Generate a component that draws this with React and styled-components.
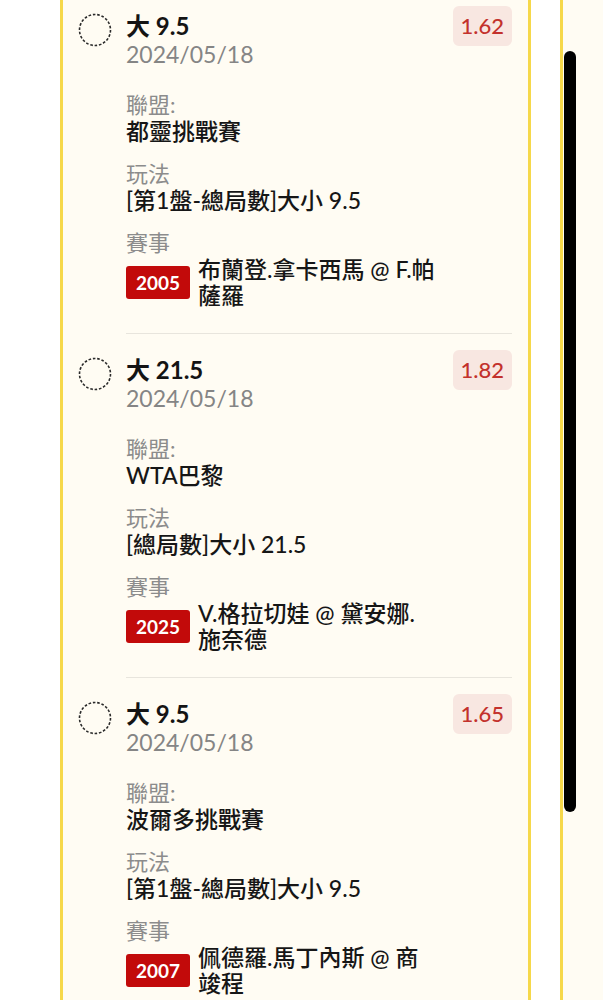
import React from 'react';
import styled, { createGlobalStyle } from 'styled-components';

const GlobalStyle = createGlobalStyle`
  html, body { margin: 0; padding: 0; overflow: hidden; background: #ffffff; }
  body { font-family: Lato, "Noto Sans CJK TC", sans-serif; }
`;

const Viewport = styled.div`
  position: relative;
  height: 1000px;
  overflow: hidden;
  display: flex;
  gap: 29px;
  padding-left: 60px;
  background: #ffffff;
`;

const Panel = styled.section`
  flex: 0 0 471px;
  box-sizing: border-box;
  border-left: 3px solid #f6d84a;
  border-right: 3px solid #f6d84a;
  background: #fffcf3;
  padding: 0 16px 0 15px;
`;

const NextPanel = styled.section`
  flex: 0 0 200px;
  border-left: 3px solid #f6d84a;
  background: #fffcf3;
`;

const List = styled.div`
  margin-top: -10px;
  display: flex;
  flex-direction: column;
`;

const Item = styled.article`
  display: flex;
  gap: 14px;
  padding-top: 16px;
`;

const Radio = styled.svg`
  flex: 0 0 34px;
  width: 34px;
  height: 34px;
  margin-top: 7px;
`;

const Body = styled.div`
  flex: 1;
  min-width: 0;
  padding-bottom: 25px;
  border-bottom: 1px solid #e8e5dd;
`;

const Header = styled.div`
  display: flex;
  justify-content: space-between;
  align-items: flex-start;
`;

const TitleBlock = styled.div`
  margin-top: 6px;
`;

const Title = styled.div`
  font-size: 24px;
  line-height: 28px;
  font-weight: 700;
  color: #141414;
`;

const DateText = styled.div`
  font-size: 23px;
  line-height: 29px;
  color: #858585;
`;

const Odds = styled.div`
  font-size: 22px;
  line-height: 40px;
  padding: 0 8px;
  border-radius: 6px;
  background: #f8e7e1;
  color: #c3322c;
  font-weight: 500;
`;

const Fields = styled.div`
  margin-top: 23px;
  display: flex;
  flex-direction: column;
  gap: 17px;
`;

const Field = styled.div`
  display: flex;
  flex-direction: column;
`;

const Label = styled.div`
  font-size: 22px;
  line-height: 26px;
  color: #8c8c8c;
`;

const Value = styled.div`
  font-size: 23px;
  line-height: 26px;
  font-weight: 500;
  color: #161616;
`;

const MatchRow = styled.div`
  display: flex;
  align-items: center;
  gap: 8px;
`;

const Code = styled.span`
  flex: 0 0 auto;
  height: 33px;
  line-height: 33px;
  padding: 0 10px;
  border-radius: 3px;
  background: #c20a0a;
  color: #ffffff;
  font-size: 19px;
  font-weight: 700;
`;

const MatchText = styled.div`
  font-size: 23px;
  line-height: 26px;
  font-weight: 500;
  color: #161616;
`;

const Scrollbar = styled.div`
  position: absolute;
  top: 51px;
  left: 564px;
  width: 12px;
  height: 761px;
  border-radius: 6px;
  background: #000000;
`;

const bets = [
  {
    title: '大 9.5',
    odds: '1.62',
    date: '2024/05/18',
    league: '都靈挑戰賽',
    play: '[第1盤-總局數]大小 9.5',
    code: '2005',
    match: ['布蘭登.拿卡西馬 @ F.帕', '薩羅'],
  },
  {
    title: '大 21.5',
    odds: '1.82',
    date: '2024/05/18',
    league: 'WTA巴黎',
    play: '[總局數]大小 21.5',
    code: '2025',
    match: ['V.格拉切娃 @ 黛安娜.', '施奈德'],
  },
  {
    title: '大 9.5',
    odds: '1.65',
    date: '2024/05/18',
    league: '波爾多挑戰賽',
    play: '[第1盤-總局數]大小 9.5',
    code: '2007',
    match: ['佩德羅.馬丁內斯 @ 商', '竣程'],
  },
];

function RadioIcon() {
  return (
    <Radio viewBox="0 0 34 34">
      <circle cx="17" cy="17" r="15.5" fill="none" stroke="#2a2a2a" strokeWidth="1.6" strokeDasharray="2.6 1.8" />
    </Radio>
  );
}

export default function App() {
  return (
    <>
      <GlobalStyle />
      <Viewport lang="zh-Hant">
        <Panel>
          <List>
            {bets.map((b, i) => (
              <Item key={i}>
                <RadioIcon />
                <Body>
                  <Header>
                    <TitleBlock>
                      <Title>{b.title}</Title>
                      <DateText>{b.date}</DateText>
                    </TitleBlock>
                    <Odds>{b.odds}</Odds>
                  </Header>
                  <Fields>
                    <Field>
                      <Label>聯盟:</Label>
                      <Value>{b.league}</Value>
                    </Field>
                    <Field>
                      <Label>玩法</Label>
                      <Value>{b.play}</Value>
                    </Field>
                    <Field>
                      <Label>賽事</Label>
                      <MatchRow>
                        <Code>{b.code}</Code>
                        <MatchText>
                          {b.match.map((line, j) => (
                            <React.Fragment key={j}>
                              {j > 0 && <br />}
                              {line}
                            </React.Fragment>
                          ))}
                        </MatchText>
                      </MatchRow>
                    </Field>
                  </Fields>
                </Body>
              </Item>
            ))}
          </List>
        </Panel>
        <NextPanel />
        <Scrollbar />
      </Viewport>
    </>
  );
}
